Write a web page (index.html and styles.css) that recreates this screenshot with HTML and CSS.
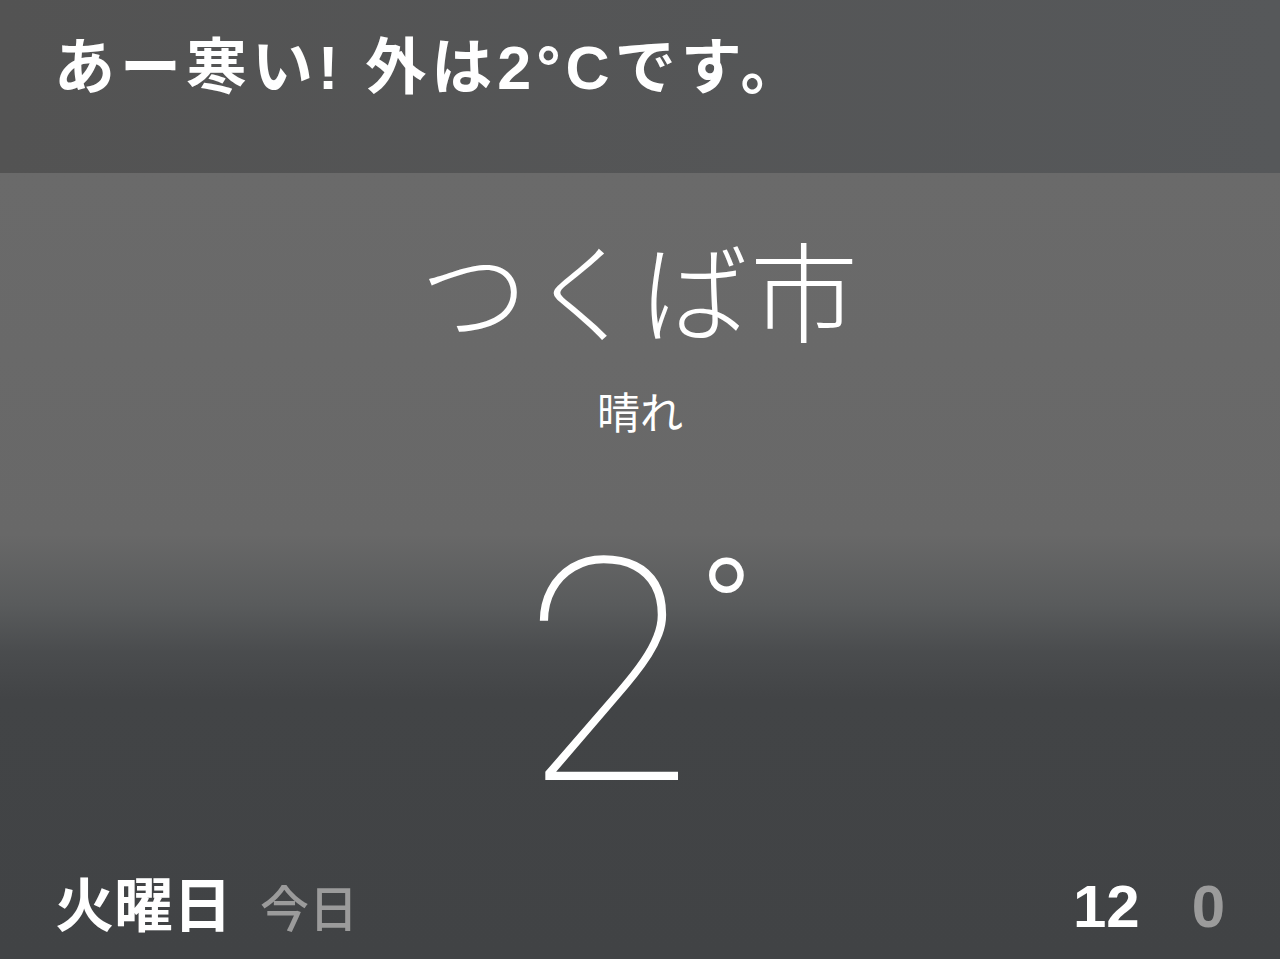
FILE: index.html
```html
<!DOCTYPE html>
<html lang="ja">
<head>
<meta charset="utf-8">
<title>Weather</title>
<link rel="stylesheet" href="styles.css">
</head>
<body>
<div class="screen">
  <header class="banner">
    <h1 class="speech">あー寒い! 外は2°Cです。</h1>
  </header>
  <main class="weather">
    <div class="city">つくば市</div>
    <div class="cond">晴れ</div>
    <div class="temp"><span class="num">2</span><span class="deg">°</span></div>
    <div class="day-row">
      <div class="day">火曜日<span class="today">今日</span></div>
      <div class="hilo"><span class="hi">12</span><span class="lo">0</span></div>
    </div>
  </main>
</div>
</body>
</html>
```
FILE: styles.css
```css
html, body {
  margin: 0;
  padding: 0;
  background: #424446;
}
.screen {
  width: 1280px;
  height: 959px;
  display: flex;
  flex-direction: column;
  overflow: hidden;
  font-family: "Noto Sans CJK JP", "Liberation Sans", sans-serif;
  color: #fff;
}
.banner {
  height: 173px;
  flex: none;
  box-sizing: border-box;
  padding: 30px 0 0 54px;
  background: linear-gradient(to right, #535353, #56585a);
}
.speech {
  margin: 0;
  font-family: "Liberation Sans", "Noto Sans CJK JP", sans-serif;
  font-weight: 700;
  font-size: 61px;
  line-height: 76px;
  letter-spacing: 5px;
}
.weather {
  flex: 1;
  display: flex;
  flex-direction: column;
  align-items: center;
  background: linear-gradient(to bottom, #6a6a6a 0%, #686868 46%, #595b5c 55%, #4a4c4e 61%, #424446 67%, #414345 100%);
}
.city {
  margin-top: 60px;
  font-size: 108px;
  font-weight: 300;
  line-height: 1;
  letter-spacing: 2px;
}
.cond {
  margin-top: 48px;
  font-size: 43px;
  font-weight: 400;
  line-height: 1;
}
.temp {
  margin-top: 122px;
  display: flex;
  align-items: flex-start;
  padding-right: 4px;
  font-family: "Roboto", "Lato", sans-serif;
  font-weight: 100;
}
.num {
  font-size: 312px;
  line-height: 240px;
}
.deg {
  margin: -13px 0 0 6px;
  font-size: 146px;
  font-weight: 300;
  line-height: 1;
}
.day-row {
  margin-top: auto;
  align-self: stretch;
  display: flex;
  justify-content: space-between;
  align-items: baseline;
  padding: 0 55px 22px 55px;
}
.day {
  font-size: 59px;
  font-weight: 700;
  line-height: 1;
}
.today {
  margin-left: 28px;
  font-size: 49px;
  font-weight: 500;
  color: #9b9b9b;
}
.hilo {
  display: flex;
  gap: 52px;
  font-family: "Liberation Sans", sans-serif;
  font-weight: 700;
  font-size: 60px;
  line-height: 1;
}
.lo {
  color: #9b9b9b;
}
```
